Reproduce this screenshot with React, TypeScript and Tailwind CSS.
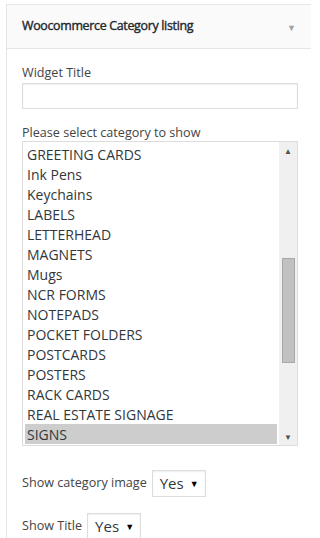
const categories = [
  'GREETING CARDS',
  'Ink Pens',
  'Keychains',
  'LABELS',
  'LETTERHEAD',
  'MAGNETS',
  'Mugs',
  'NCR FORMS',
  'NOTEPADS',
  'POCKET FOLDERS',
  'POSTCARDS',
  'POSTERS',
  'RACK CARDS',
  'REAL ESTATE SIGNAGE',
  'SIGNS',
];

function YesSelect() {
  return (
    <div className="flex h-[27px] w-[54px] items-center justify-between border border-[#dddddd] bg-white pl-[7px] pr-[6px] shadow-[inset_0_1px_2px_rgba(0,0,0,0.07)]">
      <span className="text-[15px] leading-none text-[#32373c]">Yes</span>
      <span className="text-[9px] leading-none text-black">▼</span>
    </div>
  );
}

export default function App() {
  return (
    <div className="h-[538px] w-[311px] overflow-hidden bg-white font-['Open_Sans',sans-serif]">
      <div className="ml-[6px] mt-[4px] w-[320px] border border-[#e5e5e5] bg-white">
        {/* Header */}
        <div className="flex h-[44px] items-center justify-between border-b border-[#e5e5e5] bg-[#fafafa] pl-[15px] pr-[29px]">
          <span className="text-[12.4px] tracking-[-0.3px] text-[#23282d] [-webkit-text-stroke:0.4px_#23282d]">
            Woocommerce Category listing
          </span>
          <span className="mt-[2px] text-[9px] leading-none text-[#a0a5aa]">▼</span>
        </div>

        {/* Body */}
        <div className="flex w-[306px] flex-col pl-[15px] pt-[15px] text-[12.6px] text-[#444444]">
          <label className="leading-[18px]">Widget Title</label>
          <div className="mt-[1px] h-[26px] w-[276px] border border-[#dddddd] bg-white shadow-[inset_0_1px_2px_rgba(0,0,0,0.07)]" />

          <label className="mt-[15px] leading-[17px]">Please select category to show</label>
          <div className="flex h-[305px] w-[276px] border border-[#dddddd] bg-white">
            <div className="flex flex-1 flex-col px-[2px] pt-[2px]">
              {categories.map((c) => (
                <div
                  key={c}
                  className={`flex h-[20px] items-center pl-[2px] text-[14px] text-[#32373c] ${
                    c === 'SIGNS' ? 'bg-[#cdcdcd]' : ''
                  }`}
                >
                  {c}
                </div>
              ))}
            </div>
            {/* scrollbar */}
            <div className="flex w-[18px] flex-col items-center bg-[#f0f0f0]">
              <div className="flex h-[17px] items-center justify-center text-[8px] leading-none text-[#505050]">▲</div>
              <div className="mt-[99px] h-[105px] w-[13px] border border-[#a8a8a8] bg-[#c1c1c1]" />
              <div className="mt-auto flex h-[17px] items-center justify-center text-[8px] leading-none text-[#505050]">▼</div>
            </div>
          </div>

          <div className="mt-[24px] flex items-center gap-[5px]">
            <span>Show category image</span>
            <YesSelect />
          </div>

          <div className="mt-[16px] flex items-center gap-[5px]">
            <span>Show Title</span>
            <YesSelect />
          </div>
        </div>
      </div>
    </div>
  );
}
